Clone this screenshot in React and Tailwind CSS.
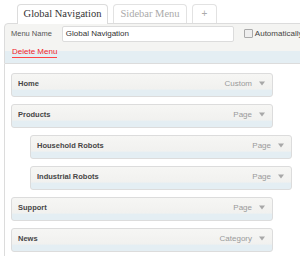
import React from "react";

function Arrow() {
  return (
    <svg width="6" height="5" viewBox="0 0 6 5" className="ml-[7px]">
      <path d="M0 0.5 L6 0.5 L3 4.5 Z" fill="#a8a8a8" />
    </svg>
  );
}

function Item({ title, type, indent }) {
  return (
    <div
      className={
        (indent ? "ml-[19px] " : "") +
        "w-[262px] h-[24px] shrink-0 border border-[#dcdcdc] rounded-[3px] flex items-center pl-[6px] pr-[7px] bg-[linear-gradient(to_bottom,#f6f6f4_0%,#f1f1ef_68%,#e4eef3_74%,#e4eef3_100%)]"
      }
    >
      <span className="text-[7.5px] font-bold text-[#464646] leading-none pb-[3px]">{title}</span>
      <span className="ml-auto text-[8px] text-[#9a9a9a] leading-none pb-[3px]">{type}</span>
      <span className="pb-[3px] flex"><Arrow /></span>
    </div>
  );
}

export default function App() {
  return (
    <div className="w-[300px] h-[256px] overflow-hidden bg-white relative leading-none" style={{ fontFamily: '"Liberation Sans", Arial, sans-serif' }}>
      {/* Tabs */}
      <div className="flex items-end gap-[5px] pl-[17px] pt-[4px] h-[23px] relative z-10">
        <div className="w-[91px] border border-b-0 border-[#dcdcdc] rounded-t-[4px] bg-white flex items-center justify-center -mb-px h-[20px]" style={{ fontFamily: '"Liberation Serif", Georgia, serif' }}>
          <span className="text-[10.5px] text-[#333]">Global Navigation</span>
        </div>
        <div className="h-[19px] w-[74px] border border-b-0 border-[#e2e2e2] rounded-t-[4px] bg-white flex items-center justify-center" style={{ fontFamily: '"Liberation Serif", Georgia, serif' }}>
          <span className="text-[10.5px] text-[#aaa]">Sidebar Menu</span>
        </div>
        <div className="h-[19px] w-[25px] border border-b-0 border-[#e2e2e2] rounded-t-[4px] bg-white flex items-center justify-center">
          <span className="text-[10px] text-[#aaa]">+</span>
        </div>
      </div>

      {/* Header */}
      <div className="ml-[4px] w-[400px] h-[41px] border border-[#dcdcdc] rounded-tl-[4px] bg-[linear-gradient(to_bottom,#f4f4f2_0%,#f4f4f2_70%,#e4eef3_70%,#e4eef3_100%)]">
        <div className="flex items-center h-[17px] mt-[1px]">
          <span className="ml-[6px] text-[7.5px] text-[#555]">Menu Name</span>
          <div className="ml-[10px] w-[172px] h-[16px] border border-[#dcdcdc] rounded-[2px] bg-white flex items-center pl-[3px]">
            <span className="text-[8px] text-[#333]">Global Navigation</span>
          </div>
          <div className="ml-[10px] w-[9px] h-[9px] border border-[#aaa] bg-[#eee] rounded-[1px]"></div>
          <span className="ml-[2px] text-[8px] text-[#444]">Automatically</span>
        </div>
        <div className="mt-[6px] ml-[7px] flex">
          <span className="text-[8px] text-[#f0222a] border-b border-[#f44] pb-[1px] leading-none">Delete Menu</span>
        </div>
      </div>

      {/* Body */}
      <div className="ml-[4px] border-l border-[#dcdcdc] h-[200px] pl-[6px] pt-[9px] flex flex-col gap-[7px]">
        <Item title="Home" type="Custom" />
        <Item title="Products" type="Page" />
        <Item title="Household Robots" type="Page" indent />
        <Item title="Industrial Robots" type="Page" indent />
        <Item title="Support" type="Page" />
        <Item title="News" type="Category" />
      </div>
    </div>
  );
}
